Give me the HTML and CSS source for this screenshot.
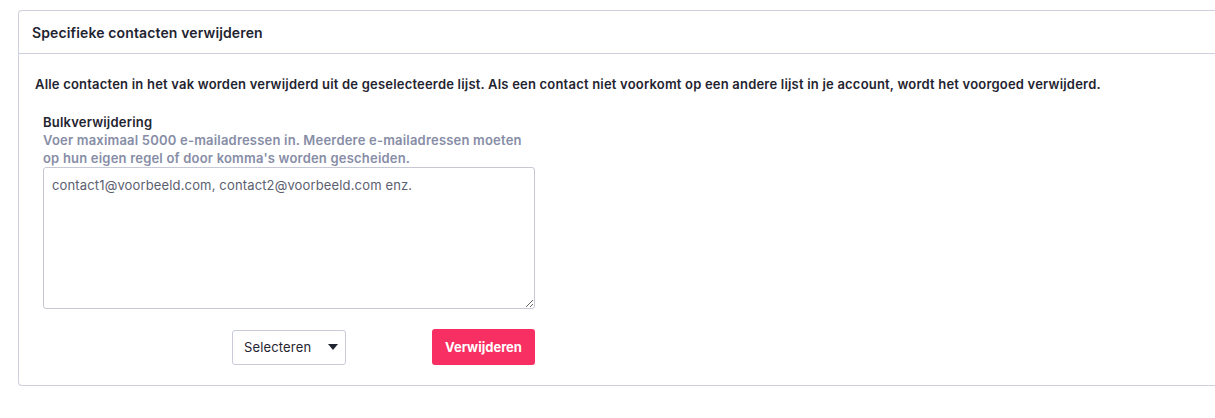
FILE: index.html
```html
<!DOCTYPE html>
<html lang="nl">
<head>
<meta charset="utf-8">
<link rel="stylesheet" href="styles.css">
</head>
<body>
<div class="page">
  <section class="card">
    <header class="card-header">Specifieke contacten verwijderen</header>
    <div class="card-body">
      <p class="intro">Alle contacten in het vak worden verwijderd uit de geselecteerde lijst. Als een contact niet voorkomt op een andere lijst in je account, wordt het voorgoed verwijderd.</p>
      <div class="field">
        <label class="label" for="bulk">Bulkverwijdering</label>
        <p class="help">Voer maximaal 5000 e-mailadressen in. Meerdere e-mailadressen moeten op hun eigen regel of door komma's worden gescheiden.</p>
        <textarea id="bulk" class="textarea" placeholder="contact1@voorbeeld.com, contact2@voorbeeld.com enz."></textarea>
        <div class="actions">
          <div class="select">
            <span>Selecteren</span>
            <svg class="caret" width="10" height="6" viewBox="0 0 10 6"><path d="M0 0h10L5 6z" fill="#1f2430"/></svg>
          </div>
          <button class="btn-danger" type="button">Verwijderen</button>
        </div>
      </div>
    </div>
  </section>
</div>
</body>
</html>
```

FILE: styles.css
```css
* { box-sizing: border-box; }
html, body { margin: 0; padding: 0; background: #fff; }
body {
  font-family: "Inter", "Liberation Sans", sans-serif;
  color: #1f2430;
}
.page {
  padding: 10px 0 0 18px;
}
.card {
  border: 1px solid #cdd0dc;
  border-right: none;
  border-radius: 4px 0 0 4px;
  height: 376px;
}
.card-header {
  height: 43px;
  border-bottom: 1px solid #cdd0dc;
  padding: 13px 0 0 13px;
  font-size: 14px;
  font-weight: 600;
  letter-spacing: 0.13px;
  color: #1f2430;
}
.card-body {
  padding: 21px 0 0 16px;
}
.intro {
  margin: 0;
  font-size: 13px;
  font-weight: 600;
  letter-spacing: 0.2px;
  line-height: 18px;
}
.field {
  width: 492px;
  margin: 20px 0 0 8px;
}
.label {
  display: block;
  font-size: 13px;
  font-weight: 600;
  letter-spacing: 0.2px;
  line-height: 18px;
}
.help {
  margin: 0;
  font-size: 13px;
  font-weight: 600;
  letter-spacing: 0.2px;
  line-height: 18px;
  color: #878da6;
}
.textarea {
  display: block;
  width: 492px;
  height: 142px;
  margin-top: 0;
  border: 1px solid #c6c9d4;
  border-radius: 3px;
  padding: 9px 8px;
  font-family: inherit;
  font-size: 13px;
  letter-spacing: 0.15px;
  resize: vertical;
}
.textarea::placeholder { color: #5b6070; }
.actions {
  display: flex;
  justify-content: flex-end;
  align-items: center;
  gap: 86px;
  margin-top: 20px;
}
.select {
  width: 114px;
  height: 35px;
  border: 1px solid #c9ccd8;
  border-radius: 3px;
  display: flex;
  align-items: center;
  justify-content: space-between;
  padding: 0 7px 0 11px;
  font-size: 13px;
  letter-spacing: 0.15px;
  color: #1f2430;
}
.caret { display: block; }
.btn-danger {
  width: 103px;
  height: 36px;
  border: none;
  border-radius: 3px;
  background: #f72f62;
  color: #fff;
  font-family: inherit;
  font-size: 13px;
  font-weight: 700;
  padding: 0;
}
```
